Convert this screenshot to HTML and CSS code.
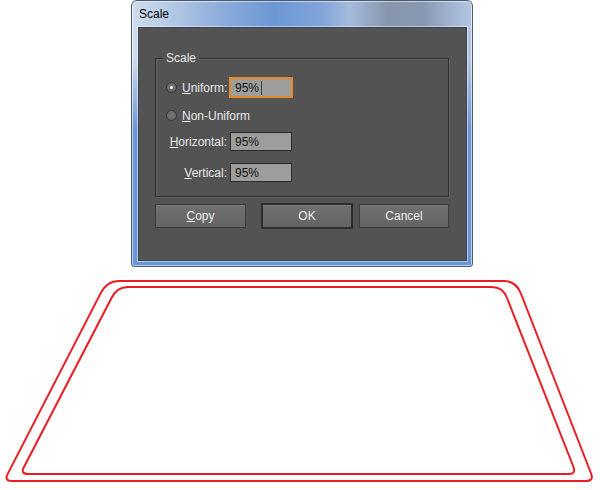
FILE: index.html
```html
<!DOCTYPE html>
<html>
<head>
<meta charset="utf-8">
<title>Scale</title>
<link rel="stylesheet" href="styles.css">
</head>
<body>
<div class="page">
  <div class="window">
    <div class="titlebar">Scale</div>
    <div class="content">
      <div class="group">
        <span class="legend">Scale</span>
        <div class="row row-uniform">
          <div class="lab lab-radio"><span class="radio checked"></span><span><u>U</u>niform:</span></div>
          <div class="input focus"><span>95%</span><span class="caret"></span></div>
        </div>
        <div class="row row-non">
          <div class="lab lab-radio"><span class="radio"></span><span><u>N</u>on-Uniform</span></div>
        </div>
        <div class="row row-h">
          <div class="lab lab-right"><span><u>H</u>orizontal:</span></div>
          <div class="input"><span>95%</span></div>
        </div>
        <div class="row row-v">
          <div class="lab lab-right"><span><u>V</u>ertical:</span></div>
          <div class="input"><span>95%</span></div>
        </div>
      </div>
      <div class="buttons">
        <div class="btn btn-copy"><span><u>C</u>opy</span></div>
        <div class="btn btn-ok"><span>OK</span></div>
        <div class="btn btn-cancel"><span>Cancel</span></div>
      </div>
    </div>
  </div>
  <svg class="shape" width="600" height="223" viewBox="0 267 600 223" xmlns="http://www.w3.org/2000/svg">
    <path d="M119 281 L504 281 Q516 281 521.1 294 L591.1 473.5 Q594 481 586 481 L12 481 Q4 481 7.7 473.9 L100.6 293.4 Q107 281 119 281 Z" fill="none" stroke="#ed1c24" stroke-width="2"/>
    <path d="M128 287 L492 287 Q503 287 507 298 L573.5 467 Q576 474 569 474 L28 474 Q20.5 474 23.6 467.7 L111.5 298 Q116.8 287 128 287 Z" fill="none" stroke="#ed1c24" stroke-width="2"/>
  </svg>
</div>
</body>
</html>
```

FILE: styles.css
```css
html, body {
  margin: 0;
  padding: 0;
  background: #ffffff;
}

.page {
  width: 600px;
  height: 490px;
  display: flex;
  flex-direction: column;
  font-family: "Liberation Sans", Arial, sans-serif;
  font-size: 12px;
  overflow: hidden;
}

.window {
  margin-left: 131px;
  width: 342px;
  height: 267px;
  box-sizing: border-box;
  border: 1px solid #4a5a70;
  border-radius: 6px 6px 3px 3px;
  padding: 0 5px 5px 6px;
  display: flex;
  flex-direction: column;
  background:
    linear-gradient(to bottom, rgba(108,149,213,0) 0px, rgba(108,149,213,0) 60px, rgba(108,149,213,1) 130px),
    linear-gradient(to right, #cfdcec 0%, #b3c8e4 12%, #88a9da 28%, #6c97d6 42%, #7ea3d8 55%, #a3bbdc 64%, #8796ad 75%, #8898b2 86%, #a4b8d6 95%, #b4c6e0 100%);
  box-shadow: inset 0 0 0 1px rgba(255,255,255,0.55);
}

.titlebar {
  height: 26px;
  line-height: 27px;
  padding-left: 1px;
  color: #000;
  font-size: 12px;
}

.content {
  flex: 1;
  box-sizing: border-box;
  background: #535353;
  border: 1px solid #3a4658;
  box-shadow: 0 0 0 1px rgba(255,255,255,0.45);
  padding: 30px 0 0 16px;
  display: flex;
  flex-direction: column;
  color: #e8e8e8;
}

.group {
  position: relative;
  width: 294px;
  height: 139px;
  box-sizing: border-box;
  border: 1px solid #2e2e2e;
  box-shadow: 1px 1px 0 #656565, inset 1px 1px 0 #656565;
  padding-top: 18px;
  display: flex;
  flex-direction: column;
}

.legend {
  position: absolute;
  top: -8px;
  left: 7px;
  padding: 0 3px;
  line-height: 14px;
  background: #535353;
  color: #e8e8e8;
}

.row {
  display: flex;
  align-items: center;
  height: 21px;
}

.row-non { margin-top: 7px; }
.row-h { margin-top: 5px; }
.row-v { margin-top: 10px; }

.lab {
  width: 74px;
  flex: none;
  display: flex;
  align-items: center;
  white-space: nowrap;
}

.lab-radio {
  padding-left: 10px;
  box-sizing: border-box;
  gap: 5px;
}

.lab-right {
  justify-content: flex-end;
  padding-right: 3px;
  box-sizing: border-box;
}

.radio {
  width: 11px;
  height: 11px;
  box-sizing: border-box;
  border-radius: 50%;
  border: 1px solid #353535;
  background: radial-gradient(circle at 50% 45%, #7a7a7a 0%, #686868 60%, #5e5e5e 100%);
  flex: none;
  display: flex;
  align-items: center;
  justify-content: center;
}

.radio.checked::after {
  content: "";
  width: 3px;
  height: 3px;
  border-radius: 50%;
  background: #f0f0f0;
}

.input {
  width: 62px;
  height: 19px;
  box-sizing: border-box;
  border: 1px solid #2c2c2c;
  background: #9d9d9d;
  color: #111;
  padding-left: 4px;
  display: flex;
  align-items: center;
  margin-left: 0;
}

.input.focus {
  border-color: #e58a26;
  box-shadow: 0 0 0 1px #e58a26;
}

.caret {
  width: 1px;
  height: 14px;
  background: #3a3a3a;
  margin-left: 2px;
}

.buttons {
  display: flex;
  align-items: center;
  height: 26px;
  margin-top: 6px;
}

.btn {
  height: 24px;
  box-sizing: border-box;
  border: 1px solid #3a3a3a;
  background: linear-gradient(to bottom, #707070, #646464);
  box-shadow: inset 0 1px 0 rgba(255,255,255,0.08);
  color: #ececec;
  display: flex;
  align-items: center;
  justify-content: center;
}

.btn-copy { width: 91px; }
.btn-ok {
  width: 92px;
  height: 26px;
  margin-left: 15px;
  border: 2px solid #2e2e2e;
}
.btn-cancel {
  width: 90px;
  margin-left: 6px;
}

.shape {
  display: block;
  flex: none;
}
```
